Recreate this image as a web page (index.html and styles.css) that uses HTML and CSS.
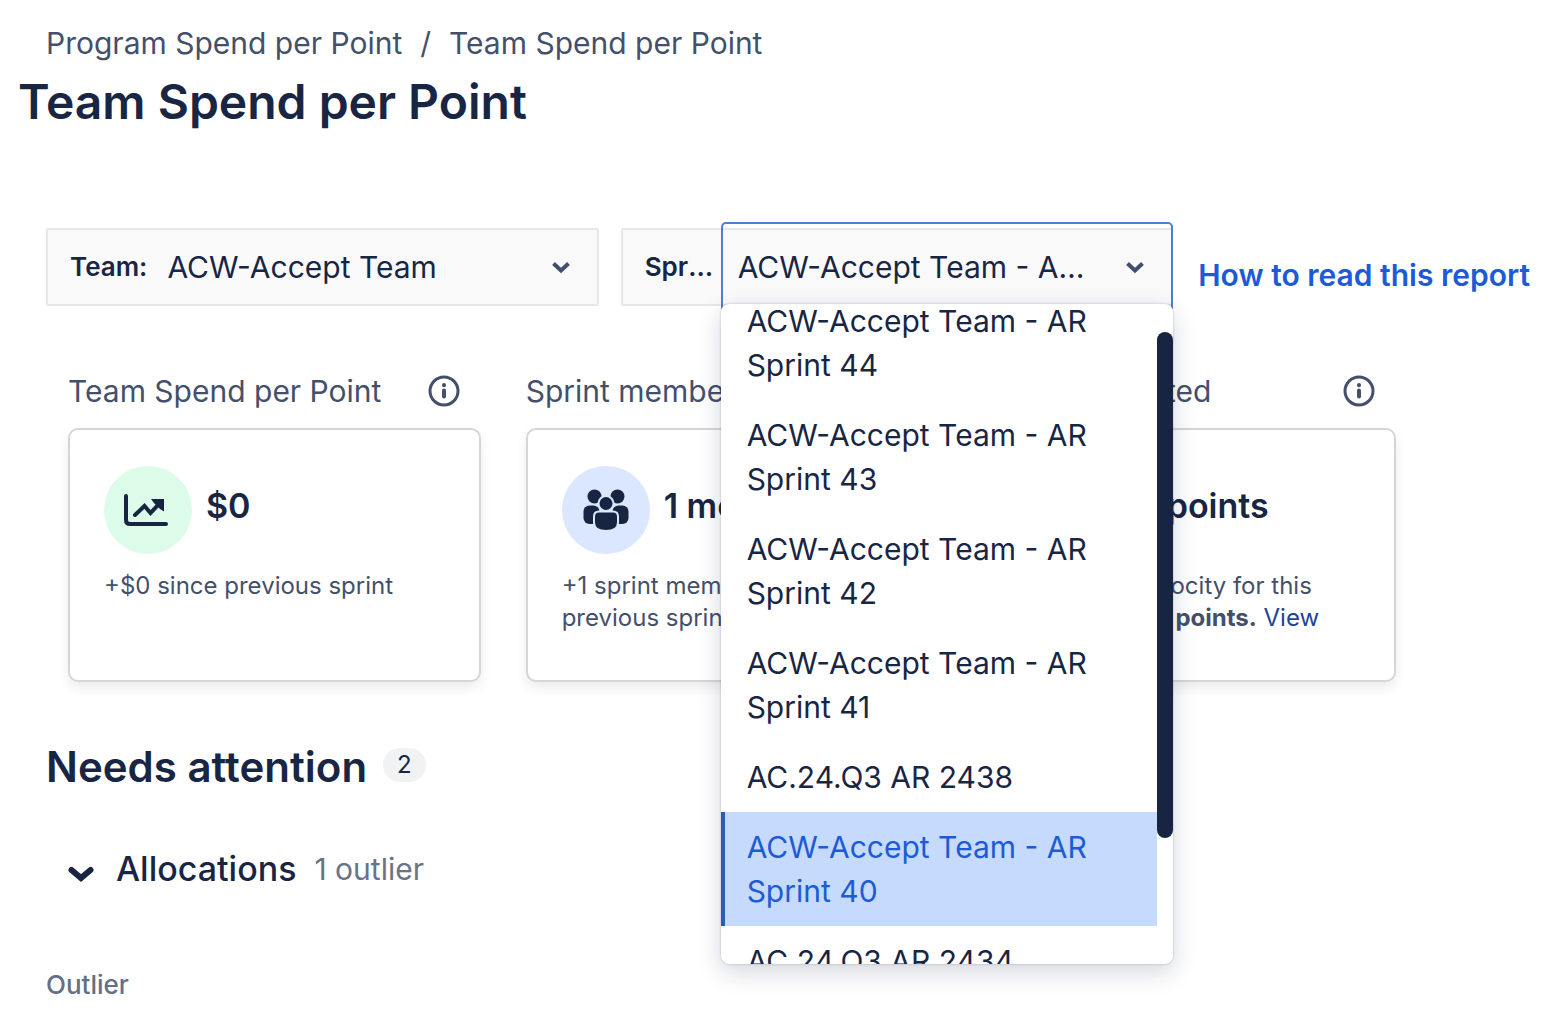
FILE: index.html
```html
<!DOCTYPE html>
<html lang="en">
<head>
    <meta charset="UTF-8">
    <meta name="viewport" content="width=device-width, initial-scale=1.0">
    <title>Team Spend per Point</title>
    <link rel="stylesheet" href="styles.css">
</head>
<body>
    <header class="page-header">
        <nav class="breadcrumbs" aria-label="Breadcrumbs">
            <a href="#">Program Spend per Point</a>
            <span>/</span>
            <a href="#">Team Spend per Point</a>
        </nav>
        <h1>Team Spend per Point</h1>
    </header>

    <main>
        <div class="filters">
            <div class="filter">
                <label class="filter-label" for="team">Team:</label>
                <div class="filter-value">
                    <select id="team">
                        <option>ACW-Accept Team</option>
                    </select>
                    <svg class="chevron" viewBox="0 0 20 14" aria-hidden="true"><path d="M2.500 3.500l7.500 7 7.500-7"/></svg>
                </div>
            </div>
            <div class="filter">
                <label class="filter-label short" for="sprint">Sprint:</label>
                <div class="filter-value focused">
                    <select id="sprint">
                        <option>ACW-Accept Team - AR Sprint 40</option>
                    </select>
                    <svg class="chevron" viewBox="0 0 20 14" aria-hidden="true"><path d="M2.500 3.500l7.500 7 7.500-7"/></svg>
                    <!-- Open sprint menu -->
                    <div class="menu">
                        <ul class="menu-list" id="sprintMenu" role="listbox" aria-label="Sprint">
                            <li role="option">ACW-Accept Team - AR Sprint 44</li>
                            <li role="option">ACW-Accept Team - AR Sprint 43</li>
                            <li role="option">ACW-Accept Team - AR Sprint 42</li>
                            <li role="option">ACW-Accept Team - AR Sprint 41</li>
                            <li role="option">AC.24.Q3 AR 2438</li>
                            <li role="option" class="selected" aria-selected="true">ACW-Accept Team - AR Sprint 40</li>
                            <li role="option">AC.24.Q3 AR 2434</li>
                        </ul>
                        <div class="menu-thumb"></div>
                    </div>
                </div>
            </div>
            <a class="help-link" href="#">How to read this report</a>
        </div>

        <section class="cards">
            <div class="metric">
                <div class="metric-title">
                    <h3>Team Spend per Point</h3>
                    <svg class="info" viewBox="0 0 32 32" aria-hidden="true"><circle cx="16" cy="16" r="14"/><path class="stem" d="M16 15.500v6"/><path class="stem" d="M16 10v.2"/></svg>
                </div>
                <div class="card">
                    <div class="card-head">
                        <span class="badge green">
                            <svg viewBox="0 0 48 48" aria-hidden="true">
                                <path class="line" d="M2 10v24q0 4 4 4h36"/>
                                <path class="line" d="M11 29l9.500-9 6 7 9-9.500"/>
                                <path class="fill" d="M27 13h13v12.500l-4-2.500-6-6z"/>
                            </svg>
                        </span>
                        <strong>$0</strong>
                    </div>
                    <p>+$0 since previous sprint</p>
                </div>
            </div>
            <div class="metric">
                <div class="metric-title">
                    <h3>Sprint members</h3>
                </div>
                <div class="card">
                    <div class="card-head">
                        <span class="badge blue">
                            <svg viewBox="0 0 48 48" aria-hidden="true">
                                <circle class="fill" cx="12.500" cy="10.500" r="7"/>
                                <circle class="fill" cx="35.500" cy="10.500" r="7"/>
                                <rect class="fill" x="1.500" y="19.500" width="16" height="18.500" rx="6"/>
                                <rect class="fill" x="30.500" y="19.500" width="16" height="18.500" rx="6"/>
                                <circle class="fill cut" cx="24" cy="17.500" r="7.500"/>
                                <path class="fill cut" d="M17 25.500h14q5 0 5 5v6q0 8.500-12 8.500t-12-8.500v-6q0-5 5-5z"/>
                            </svg>
                        </span>
                        <strong>1 member</strong>
                    </div>
                    <p>+1 sprint member since previous sprint</p>
                </div>
            </div>
            <div class="metric">
                <div class="metric-title">
                    <h3>Points accepted</h3>
                    <svg class="info" viewBox="0 0 32 32" aria-hidden="true"><circle cx="16" cy="16" r="14"/><path class="stem" d="M16 15.500v6"/><path class="stem" d="M16 10v.2"/></svg>
                </div>
                <div class="card">
                    <div class="card-head">
                        <span class="badge blue"></span>
                        <strong>10 points</strong>
                    </div>
                    <p>Estimated velocity for this sprint was <b>10 points.</b> <a href="#">View</a></p>
                </div>
            </div>
        </section>

        <section class="attention">
            <h2>Needs attention <span class="count">2</span></h2>
            <button class="group" type="button" aria-expanded="true">
                <svg class="chevron-bold" viewBox="0 0 28 20" aria-hidden="true"><path d="M4.500 6l9.500 8 9.500-8"/></svg>
                <span class="group-name">Allocations</span>
                <span class="group-count">1 outlier</span>
            </button>
            <table>
                <thead>
                    <tr><th>Outlier</th></tr>
                </thead>
            </table>
        </section>
    </main>

    <script>
        document.getElementById('sprintMenu').scrollTop = 26;
    </script>
</body>
</html>
```

FILE: styles.css
```css
* {
    box-sizing: border-box;
}
body {
    margin: 0;
    font-family: Inter, "Liberation Sans", sans-serif;
    font-size: 30px;
    line-height: 44px;
    color: #182644;
    background: #fff;
}
h1, h2, h3, p {
    margin: 0;
}
a {
    color: #1d5bd6;
    text-decoration: none;
}
.page-header {
    padding: 21px 18px 0;
}
.breadcrumbs {
    display: flex;
    gap: 18px;
    padding-left: 28px;
    color: #44506b;
}
.breadcrumbs a {
    color: #44506b;
}
h1 {
    margin-top: 7px;
    font-size: 48px;
    line-height: 60px;
    font-weight: 600;
}
main {
    padding: 96px 22px 0 46px;
}

/* Filters */
.filters {
    display: flex;
    align-items: center;
    gap: 22px;
}
.filter {
    display: flex;
    flex: 1 1 0;
    min-width: 0;
    height: 78px;
    border: 2px solid #e6e7e9;
    border-radius: 2px;
    background: #f9f9fa;
}
.filter-label {
    padding: 0 2px 0 22px;
    font-size: 26px;
    line-height: 74px;
    font-weight: 600;
}
.filter-label.short {
    width: 100px;
    padding-right: 6px;
    overflow: hidden;
    text-overflow: ellipsis;
    white-space: nowrap;
}
.filter-value {
    position: relative;
    display: flex;
    flex: 1;
    align-items: center;
    min-width: 0;
    padding: 0 26px 0 18px;
}
.filter-value.focused {
    padding-left: 15px;
}
.filter-value select {
    flex: 1;
    min-width: 0;
    height: 74px;
    padding: 0;
    border: 0;
    outline: 0;
    appearance: none;
    background: transparent;
    color: inherit;
    font: inherit;
    text-overflow: ellipsis;
}
.filter-value.focused::before {
    content: "";
    position: absolute;
    inset: -8px -2px;
    border: 2px solid #4c7fd0;
    border-radius: 5px;
    pointer-events: none;
}
.chevron {
    width: 20px;
    height: 14px;
    margin-left: 30px;
    fill: none;
    stroke: #44506b;
    stroke-width: 4;
}
.help-link {
    padding: 16px 0 0 3px;
    font-weight: 600;
    white-space: nowrap;
}

/* Sprint menu */
.menu {
    position: absolute;
    z-index: 2;
    top: 74px;
    left: -2px;
    right: -2px;
    height: 660px;
    overflow: hidden;
    border-radius: 8px;
    background: #fff;
    box-shadow: 0 8px 24px rgba(9, 30, 66, 0.18), 0 0 2px rgba(9, 30, 66, 0.3);
}
.menu-list {
    height: 100%;
    margin: 0;
    padding: 8px 16px 8px 0;
    overflow-y: auto;
    scrollbar-width: none;
    list-style: none;
}
.menu-list li {
    padding: 13px 40px 13px 22px;
    border-left: 4px solid transparent;
}
.menu-list .selected {
    border-color: #2c5bb8;
    background: #c5dafd;
    color: #1d5bd6;
}
.menu-thumb {
    position: absolute;
    top: 28px;
    right: 0;
    width: 16px;
    height: 506px;
    border-radius: 8px;
    background: #172542;
}

/* Metric cards */
.cards {
    display: grid;
    grid-template-columns: repeat(3, 1fr);
    gap: 45px;
    margin: 63px 134px 0 22px;
}
.metric {
    min-width: 0;
}
.metric-title {
    display: flex;
    align-items: center;
    justify-content: space-between;
    padding-right: 21px;
    color: #44506b;
}
.metric-title h3 {
    font-size: 30px;
    font-weight: 400;
}
.info {
    width: 32px;
    height: 32px;
    fill: none;
    stroke: #44506b;
    stroke-width: 3;
    stroke-linecap: round;
}
.info .stem {
    stroke-width: 4;
}
.card {
    height: 254px;
    margin-top: 15px;
    padding: 36px 34px;
    border: 2px solid #d5d6d9;
    border-radius: 10px;
    background: #fff;
    box-shadow: 0 6px 12px rgba(0, 0, 0, 0.08);
}
.card-head {
    display: flex;
    align-items: center;
    gap: 14px;
}
.card-head strong {
    padding-bottom: 8px;
    font-size: 34px;
    font-weight: 600;
}
.badge {
    display: flex;
    align-items: center;
    justify-content: center;
    width: 88px;
    height: 88px;
    border-radius: 50%;
}
.badge.green {
    background: #dcfce9;
}
.badge.blue {
    background: #dbe7ff;
}
.badge svg {
    width: 48px;
    height: 48px;
}
.badge .line {
    fill: none;
    stroke: #172542;
    stroke-width: 4;
    stroke-linecap: round;
}
.badge .fill {
    fill: #172542;
}
.badge .cut {
    stroke: #dbe7ff;
    stroke-width: 2;
}
.card p {
    margin-top: 16px;
    font-size: 24px;
    line-height: 32px;
    color: #44506b;
}
.card p a {
    color: #1e4597;
}

/* Needs attention */
.attention {
    margin-top: 57px;
}
h2 {
    display: flex;
    align-items: center;
    gap: 16px;
    font-size: 42px;
    line-height: 56px;
    font-weight: 600;
}
.count {
    margin-bottom: 4px;
    padding: 0 14px;
    border-radius: 17px;
    background: #f1f2f4;
    font-size: 24px;
    line-height: 34px;
    font-weight: 400;
}
.group {
    display: flex;
    align-items: center;
    margin-top: 52px;
    padding: 0 0 0 21px;
    border: 0;
    background: none;
    color: inherit;
    font: inherit;
}
.group-name {
    margin: 0 18px 0 21px;
    font-size: 34px;
    font-weight: 500;
}
.group-count {
    color: #6b7285;
    font-size: 30px;
}
.chevron-bold {
    width: 28px;
    height: 20px;
    margin-top: 10px;
    fill: none;
    stroke: #172542;
    stroke-width: 6;
    stroke-linecap: round;
}
table {
    margin-top: 72px;
    border-collapse: collapse;
}
th {
    padding: 0;
    color: #626f86;
    font-size: 26px;
    font-weight: 500;
}
```
